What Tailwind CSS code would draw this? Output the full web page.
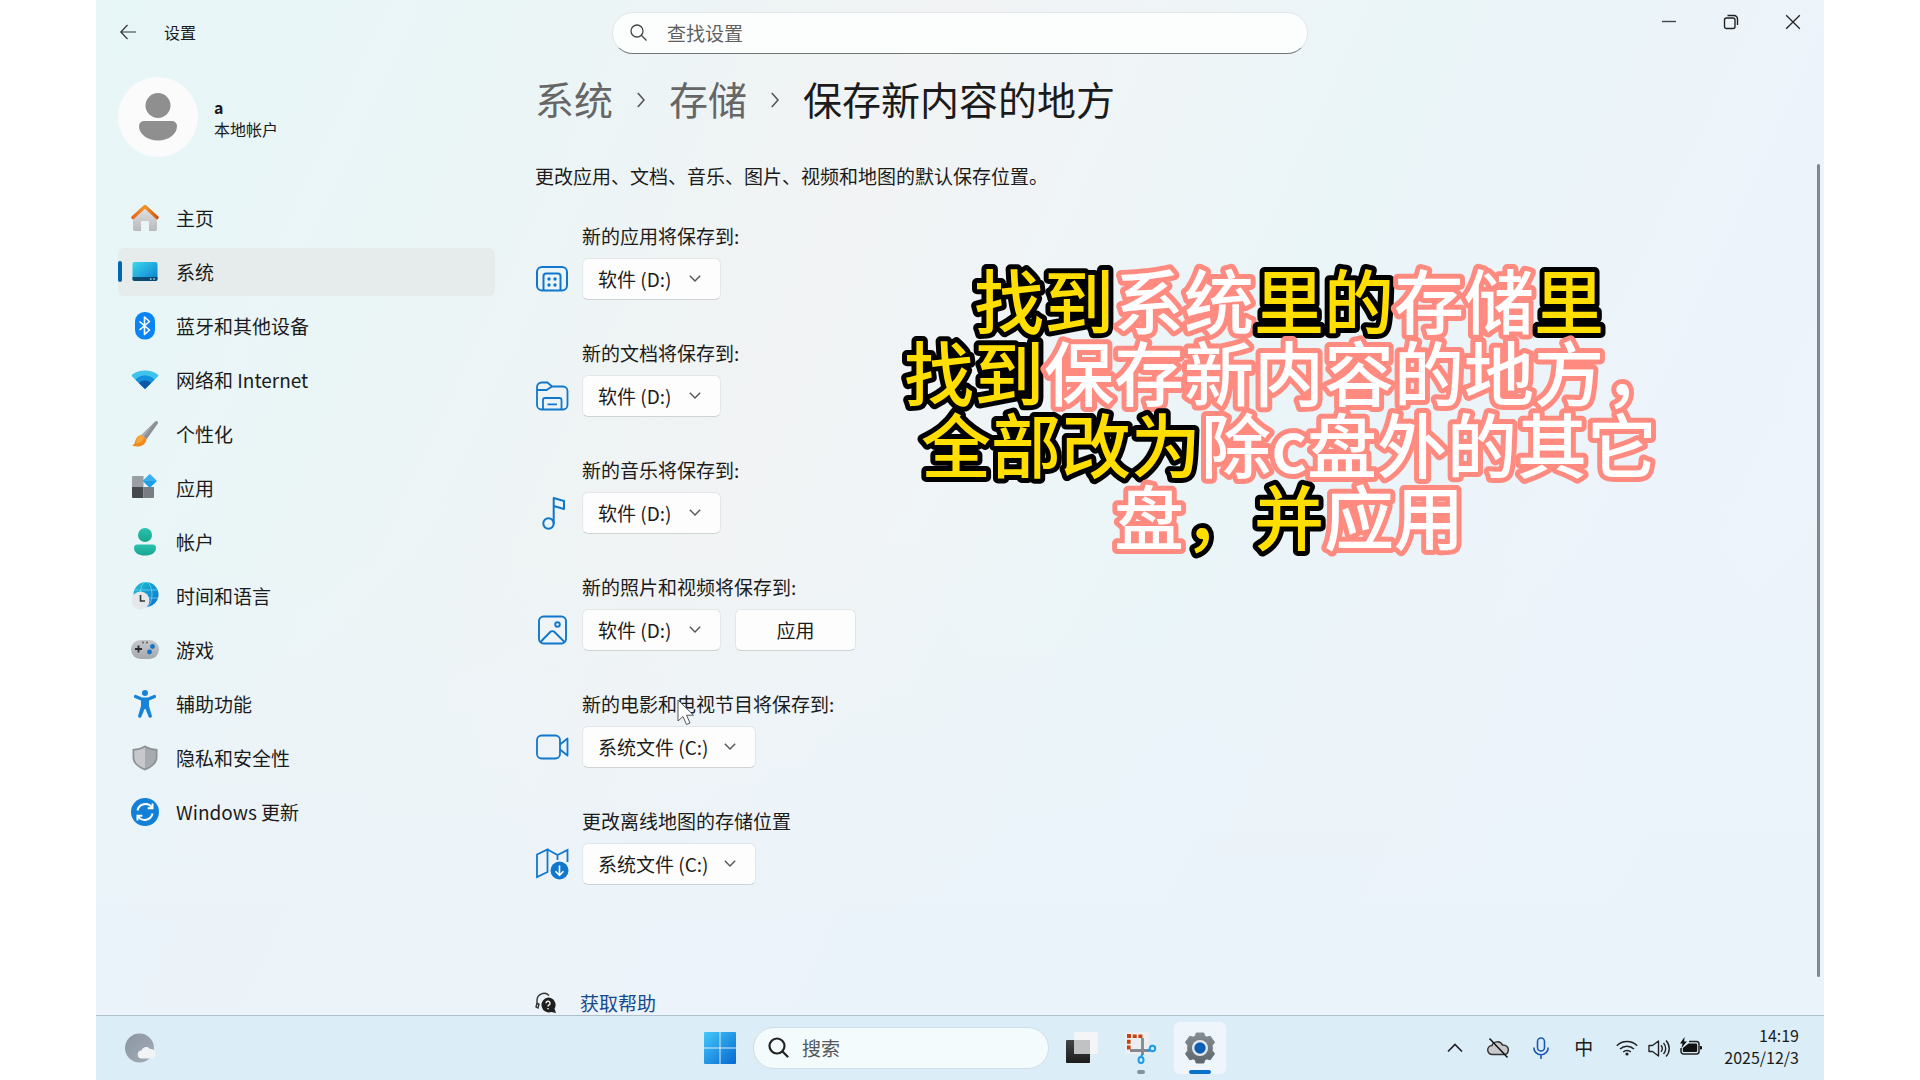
<!DOCTYPE html>
<html lang="zh-CN">
<head>
  <meta charset="UTF-8">
  <meta name="viewport" content="width=device-width, initial-scale=1.0">
  <title>设置 - 保存新内容的地方</title>
  <script src="https://cdn.jsdelivr.net/npm/@tailwindcss/browser@4"></script>
</head>
<body class="bg-white px-24 font-['Noto_Sans_CJK_SC',sans-serif] text-[#1b1b1b] antialiased">
  <div class="relative flex h-screen flex-col overflow-hidden bg-[linear-gradient(180deg,#ebf3fa00_50%,#ebf3fae0_85%),linear-gradient(115deg,#e7f6f7_0%,#eaf5f6_18%,#f1f3f4_38%,#f0f4f6_46%,#eaf5f8_60%,#edf3fa_80%,#ebf4fa_100%)]">

    <!-- 标题栏 -->
    <header class="grid h-[60px] shrink-0 grid-cols-[1fr_696px_1fr]">
      <div class="flex items-center gap-[28px] pt-[4px] pl-[24px]">
        <button aria-label="返回">
          <svg class="h-4 w-4" viewBox="0 0 16 16" fill="none" stroke="#333" stroke-width="1.2"><path d="M16 8H1M7.500 1L0.800 8l6.700 7"/></svg>
        </button>
        <span class="text-[16px] leading-6">设置</span>
      </div>
      <div class="relative pt-[12px]">
        <svg class="absolute top-[24px] left-[18px] h-[17px] w-[17px]" viewBox="0 0 17 17" fill="none" stroke="#444" stroke-width="1.3"><circle cx="7" cy="7" r="6"/><path d="M11.300 11.300L16.500 16.500"/></svg>
        <input type="text" aria-label="查找设置" placeholder="查找设置" class="h-[42px] w-full rounded-full border border-b-[#6f7777] border-[#e2e6e6] bg-[#fcfdfd] pr-6 pb-[2px] pl-[54px] text-[19px] placeholder-[#5f6161] outline-none">
      </div>
      <div class="flex justify-end">
        <button class="flex h-[43px] w-[62px] items-center justify-center" aria-label="最小化">
          <svg class="h-4 w-4" viewBox="0 0 16 16" stroke="#444" stroke-width="1.4"><path d="M1 7.500h14"/></svg>
        </button>
        <button class="flex h-[43px] w-[62px] items-center justify-center" aria-label="还原">
          <svg class="h-4 w-4" viewBox="0 0 16 16" fill="none" stroke="#222" stroke-width="1.4"><rect x="1.500" y="4" width="10.500" height="10.500" rx="2"/><path d="M4.500 1.500H11a3.500 3.500 0 0 1 3.500 3.500v6"/></svg>
        </button>
        <button class="flex h-[43px] w-[62px] items-center justify-center" aria-label="关闭">
          <svg class="h-4 w-4" viewBox="0 0 16 16" stroke="#222" stroke-width="1.3"><path d="M1.200 1.200l13.600 13.600M14.800 1.200L1.200 14.800"/></svg>
        </button>
      </div>
    </header>

    <div class="flex min-h-0 flex-1">
      <!-- 侧边栏 -->
      <aside class="w-[399px] shrink-0 pt-[17px] pl-[22px]">
        <div class="flex items-center gap-4">
          <svg class="h-20 w-20" viewBox="0 0 80 80"><circle cx="40" cy="40" r="40" fill="#fbfbfb"/><circle cx="40" cy="28.500" r="12.500" fill="#8f8f8f"/><path d="M26 44h28a5 5 0 0 1 5 5c0 8-8 14.500-19 14.500S21 57 21 49a5 5 0 0 1 5-5z" fill="#8f8f8f"/></svg>
          <div class="pt-[2px] text-[16px] leading-[22px]">
            <p class="font-bold">a</p>
            <p>本地帐户</p>
          </div>
        </div>

        <nav class="mt-[37px] flex flex-col gap-[6px] text-[19px]">
          <a href="#" class="flex h-12 items-center gap-[17px] rounded-md px-[13px]">
            <svg class="h-7 w-7" viewBox="0 0 28 28"><defs><linearGradient id="wall" x2="0" y2="1"><stop stop-color="#e3e3e5"/><stop offset="1" stop-color="#b9b9bd"/></linearGradient><linearGradient id="roof"><stop stop-color="#e8661b"/><stop offset=".5" stop-color="#f0962a"/><stop offset="1" stop-color="#cf5510"/></linearGradient></defs><path d="M2 12L14 3l12 9v13a2 2 0 0 1-2 2h-6V17h-8v10H4a2 2 0 0 1-2-2z" fill="url(#wall)"/><path d="M2 13.500L14 2.500l12 11" fill="none" stroke="url(#roof)" stroke-width="3.400" stroke-linecap="round" stroke-linejoin="round"/></svg>
            主页
          </a>
          <a href="#" aria-current="page" class="relative flex h-12 items-center gap-[17px] rounded-md bg-[#e6ebeb] px-[13px]">
            <span class="absolute top-[13px] left-0 h-[21px] w-1 rounded-full bg-[#0066b8]"></span>
            <svg class="h-7 w-7" viewBox="0 0 28 28"><defs><linearGradient id="scr" x2="1" y2="1"><stop stop-color="#3ad8ea"/><stop offset="1" stop-color="#0a7bd0"/></linearGradient></defs><rect x="1.500" y="4" width="25" height="19" rx="2" fill="url(#scr)"/><path d="M1.500 19h25v2a2 2 0 0 1-2 2h-21a2 2 0 0 1-2-2z" fill="#0b4a72"/><path d="M19 20.300h1.500v1.500H19zM22.300 20.300h1.500v1.500h-1.500z" fill="#b8dcec"/></svg>
            系统
          </a>
          <a href="#" class="flex h-12 items-center gap-[17px] rounded-md px-[13px]">
            <svg class="h-7 w-7" viewBox="0 0 28 28"><rect x="4" y="0" width="20" height="27.500" rx="9.500" fill="#0a84f5"/><path d="M8.500 9.500l10 8.500-5 4.500V5l5 4.500-10 8.500" fill="none" stroke="#fff" stroke-width="1.600" stroke-linejoin="round"/></svg>
            蓝牙和其他设备
          </a>
          <a href="#" class="flex h-12 items-center gap-[17px] rounded-md px-[13px]">
            <svg class="h-7 w-7" viewBox="0 0 28 28"><defs><clipPath id="fan"><path d="M14 23L1.200 10.500a1.500 1.500 0 0 1 0-2C8 3 20 3 26.800 8.500a1.500 1.500 0 0 1 0 2z"/></clipPath></defs><g clip-path="url(#fan)"><path d="M0 0h28v28H0z" fill="#3fc3ea"/><circle cx="14" cy="23" r="13.500" fill="#1490df"/><circle cx="14" cy="23" r="8.500" fill="#0c57a8"/></g></svg>
            网络和 Internet
          </a>
          <a href="#" class="flex h-12 items-center gap-[17px] rounded-md px-[13px]">
            <svg class="h-7 w-7" viewBox="0 0 28 28"><path d="M24.500 1.200c1.800-.6 3 .6 2.300 2.300L15.500 19.500l-5-4.500z" fill="#8d9096"/><path d="M24.500 1.200L10.500 15l2 2z" fill="#a9acb1"/><path d="M10.500 15l5 4.500c-1 6.500-8 8.500-14.500 6 3-.8 2.800-3.300 3.800-6 1-2.800 3.200-4.300 5.700-4.500z" fill="#f08a1c"/><path d="M10.500 15l2.500 2.200c-1 4-4 6-8 6 .5-4 2-7.700 5.500-8.200z" fill="#f9a63c"/></svg>
            个性化
          </a>
          <a href="#" class="flex h-12 items-center gap-[17px] rounded-md px-[13px]">
            <svg class="h-7 w-7" viewBox="0 0 28 28"><path d="M2 2h10.500v11H1V3a1 1 0 0 1 1-1z" fill="#9b9ea4"/><path d="M1 13h11.500v11H2a1 1 0 0 1-1-1z" fill="#45484c"/><path d="M12.500 13H23v10a1 1 0 0 1-1 1h-9.500z" fill="#797c82"/><rect x="13.800" y="2" width="10" height="10" rx="1" transform="rotate(45 18.800 7)" fill="#1e9ee6"/><path d="M18.800 0L12 7h13.600z" fill="#4dbcf0" opacity=".6"/></svg>
            应用
          </a>
          <a href="#" class="flex h-12 items-center gap-[17px] rounded-md px-[13px]">
            <svg class="h-7 w-7" viewBox="0 0 28 28"><defs><linearGradient id="usr" x2="0" y2="1"><stop stop-color="#2cc3b0"/><stop offset="1" stop-color="#16a58f"/></linearGradient></defs><circle cx="14" cy="7" r="7" fill="url(#usr)"/><path d="M6.500 16.500h15a3.500 3.500 0 0 1 3.500 3.500c0 5-5 7.500-11 7.500S3 25 3 20a3.500 3.500 0 0 1 3.500-3.500z" fill="url(#usr)"/></svg>
            帐户
          </a>
          <a href="#" class="flex h-12 items-center gap-[17px] rounded-md px-[13px]">
            <svg class="h-7 w-7" viewBox="0 0 28 28"><defs><linearGradient id="glb" x2="1" y2="1"><stop stop-color="#20c3d4"/><stop offset="1" stop-color="#0a6fd0"/></linearGradient></defs><circle cx="15" cy="12.500" r="12.500" fill="url(#glb)"/><g fill="none" stroke="#7fdaf0" stroke-width=".7"><ellipse cx="15" cy="12.500" rx="6" ry="12.500"/><path d="M4 8h22M3 16h24"/></g><circle cx="9.500" cy="18.500" r="9" fill="#e6e7ea"/><path d="M9.500 13v6h4.500" fill="none" stroke="#333" stroke-width="1.600"/></svg>
            时间和语言
          </a>
          <a href="#" class="flex h-12 items-center gap-[17px] rounded-md px-[13px]">
            <svg class="h-7 w-7" viewBox="0 0 28 28"><defs><linearGradient id="pad" x2="0" y2="1"><stop stop-color="#c6c8cc"/><stop offset="1" stop-color="#a5a8ad"/></linearGradient></defs><rect x="0" y="4" width="28" height="19" rx="9.500" fill="url(#pad)"/><path d="M7.500 9.500v7M4 13h7" stroke="#2b2b2b" stroke-width="1.800"/><circle cx="21.500" cy="10.500" r="2.400" fill="#0f74cc"/><circle cx="18.500" cy="16" r="2.400" fill="#0f74cc"/><circle cx="12" cy="6.500" r=".9" fill="#555"/><circle cx="16" cy="6.500" r=".9" fill="#555"/></svg>
            游戏
          </a>
          <a href="#" class="flex h-12 items-center gap-[17px] rounded-md px-[13px]">
            <svg class="h-7 w-7" viewBox="0 0 28 28"><circle cx="14" cy="3" r="3" fill="#1683d8"/><path d="M4.500 6.500l6 2.500h7l6-2.500" fill="none" stroke="#1683d8" stroke-width="3.200" stroke-linecap="round" stroke-linejoin="round"/><path d="M10 8h8v8l2.800 9.500a1.700 1.700 0 0 1-3.200 1.200L14.500 19h-1l-3.100 7.700a1.700 1.700 0 0 1-3.200-1.200L10 16z" fill="#1683d8"/></svg>
            辅助功能
          </a>
          <a href="#" class="flex h-12 items-center gap-[17px] rounded-md px-[13px]">
            <svg class="h-7 w-7" viewBox="0 0 28 28"><path d="M14 1.500c3.500 2 7.500 3.200 12.500 3.500v8c0 6.500-5 10.500-12.500 13.500C6.500 23.500 1.500 19.500 1.500 13V5C6.500 4.700 10.500 3.500 14 1.500z" fill="#8e9297"/><path d="M14 3.500v21C7.500 22 3.300 18.500 3.300 13V6.500C7.500 6.200 11 5.200 14 3.500z" fill="#c6c8cb"/><path d="M14 3.500v21c6.500-2.500 10.700-6 10.700-11.500V6.500C20.500 6.200 17 5.200 14 3.500z" fill="#a7aaae"/></svg>
            隐私和安全性
          </a>
          <a href="#" class="flex h-12 items-center gap-[17px] rounded-md px-[13px]">
            <svg class="h-7 w-7" viewBox="0 0 28 28"><circle cx="14" cy="14" r="14" fill="#1280d6"/><g fill="none" stroke="#fff" stroke-width="2"><path d="M6.500 12.500a8 8 0 0 1 14.500-2.800"/><path d="M21.500 5.500v4.800h-4.800"/><path d="M21.500 15.500A8 8 0 0 1 7 18.300"/><path d="M6.500 22.500v-4.800h4.800"/></g></svg>
            Windows 更新
          </a>
        </nav>
      </aside>

      <!-- 主内容 -->
      <main class="min-w-0 flex-1 overflow-hidden pt-[14px] pl-[40px]">
        <div class="flex items-center gap-6 text-[39px] leading-[48px]">
          <a href="#" class="text-[#666]">系统</a>
          <svg class="mt-1 h-4 w-2" viewBox="0 0 8 16" fill="none" stroke="#555" stroke-width="1.600"><path d="M.8 1L7 8 .8 15"/></svg>
          <a href="#" class="text-[#666]">存储</a>
          <svg class="mt-1 h-4 w-2" viewBox="0 0 8 16" fill="none" stroke="#555" stroke-width="1.600"><path d="M.8 1L7 8 .8 15"/></svg>
          <h1>保存新内容的地方</h1>
        </div>
        <p class="mt-10 text-[19px] leading-7">更改应用、文档、音乐、图片、视频和地图的默认保存位置。</p>

        <form class="mt-8 flex flex-col gap-[39px] text-[19px]">
          <div class="grid grid-cols-[34px_1fr] items-center gap-x-[13px] gap-y-2">
            <label for="save-apps" class="col-start-2 leading-7">新的应用将保存到:</label>
            <svg class="h-[34px] w-[34px]" viewBox="0 0 34 34" fill="none" stroke="#0f78cc" stroke-width="2"><rect x="2" y="5" width="30" height="23.500" rx="5"/><path d="M8.500 28V14a2.500 2.500 0 0 1 2.500-2.500h12a2.500 2.500 0 0 1 2.500 2.500v14"/><g fill="#0f78cc" stroke="none"><circle cx="14" cy="17" r="1.700"/><circle cx="20" cy="17" r="1.700"/><circle cx="14" cy="23" r="1.700"/><circle cx="20" cy="23" r="1.700"/></g></svg>
            <div class="flex">
              <div class="relative">
                <select id="save-apps" class="h-[42px] w-[139px] appearance-none rounded-md border border-[#e3e6e7] border-b-[#cfd3d4] bg-[#fdfdfd] pl-[15px]"><option>软件 (D:)</option></select>
                <svg class="pointer-events-none absolute top-[17px] right-5 h-[7px] w-3" viewBox="0 0 12 7" fill="none" stroke="#555" stroke-width="1.400"><path d="M.8.8L6 6 11.200.8"/></svg>
              </div>
            </div>
          </div>

          <div class="grid grid-cols-[34px_1fr] items-center gap-x-[13px] gap-y-2">
            <label for="save-docs" class="col-start-2 leading-7">新的文档将保存到:</label>
            <svg class="h-[34px] w-[34px]" viewBox="0 0 34 34" fill="none" stroke="#0f78cc" stroke-width="1.800"><path d="M2 8a4.500 4.500 0 0 1 4.500-4.500h6L17 7.500h11A4.500 4.500 0 0 1 32.500 12v14a4.500 4.500 0 0 1-4.500 4.500H6.500A4.500 4.500 0 0 1 2 26z"/><path d="M2 11h9.500L17 7.500"/><path d="M8 30V21a2 2 0 0 1 2-2h14.500a2 2 0 0 1 2 2v9M12.500 25.300H22"/></svg>
            <div class="flex">
              <div class="relative">
                <select id="save-docs" class="h-[42px] w-[139px] appearance-none rounded-md border border-[#e3e6e7] border-b-[#cfd3d4] bg-[#fdfdfd] pl-[15px]"><option>软件 (D:)</option></select>
                <svg class="pointer-events-none absolute top-[17px] right-5 h-[7px] w-3" viewBox="0 0 12 7" fill="none" stroke="#555" stroke-width="1.400"><path d="M.8.8L6 6 11.200.8"/></svg>
              </div>
            </div>
          </div>

          <div class="grid grid-cols-[34px_1fr] items-center gap-x-[13px] gap-y-2">
            <label for="save-music" class="col-start-2 leading-7">新的音乐将保存到:</label>
            <svg class="h-[34px] w-[34px]" viewBox="0 0 34 34" fill="none" stroke="#0f78cc" stroke-width="2" stroke-linejoin="round"><circle cx="13.500" cy="27.500" r="5.200"/><path d="M18.700 27.500V2l10.300 3v8l-10.300-3"/></svg>
            <div class="flex">
              <div class="relative">
                <select id="save-music" class="h-[42px] w-[139px] appearance-none rounded-md border border-[#e3e6e7] border-b-[#cfd3d4] bg-[#fdfdfd] pl-[15px]"><option>软件 (D:)</option></select>
                <svg class="pointer-events-none absolute top-[17px] right-5 h-[7px] w-3" viewBox="0 0 12 7" fill="none" stroke="#555" stroke-width="1.400"><path d="M.8.8L6 6 11.200.8"/></svg>
              </div>
            </div>
          </div>

          <div class="grid grid-cols-[34px_1fr] items-center gap-x-[13px] gap-y-2">
            <label for="save-photos" class="col-start-2 leading-7">新的照片和视频将保存到:</label>
            <svg class="h-[34px] w-[34px]" viewBox="0 0 34 34" fill="none" stroke="#0f78cc" stroke-width="1.900"><rect x="4" y="3.500" width="27" height="27" rx="4.500"/><circle cx="22.500" cy="11.500" r="2.300"/><path d="M5.500 29l9.700-10a3 3 0 0 1 4.300 0L29.500 29"/></svg>
            <div class="flex gap-[14px]">
              <div class="relative">
                <select id="save-photos" class="h-[42px] w-[139px] appearance-none rounded-md border border-[#e3e6e7] border-b-[#cfd3d4] bg-[#fdfdfd] pl-[15px]"><option>软件 (D:)</option></select>
                <svg class="pointer-events-none absolute top-[17px] right-5 h-[7px] w-3" viewBox="0 0 12 7" fill="none" stroke="#555" stroke-width="1.400"><path d="M.8.8L6 6 11.200.8"/></svg>
              </div>
              <button type="button" class="h-[42px] w-[121px] rounded-md border border-[#e3e6e7] border-b-[#cfd3d4] bg-[#fdfdfd]">应用</button>
            </div>
          </div>

          <div class="grid grid-cols-[34px_1fr] items-center gap-x-[13px] gap-y-2">
            <label for="save-movies" class="col-start-2 leading-7">新的电影和电视节目将保存到:</label>
            <svg class="h-[34px] w-[34px]" viewBox="0 0 34 34" fill="none" stroke="#0f78cc" stroke-width="1.800" stroke-linejoin="round"><rect x="2" y="5.500" width="23" height="23" rx="4.500"/><path d="M25 14.500l7.500-6v17l-7.500-6"/></svg>
            <div class="flex">
              <div class="relative">
                <select id="save-movies" class="h-[42px] w-[174px] appearance-none rounded-md border border-[#e3e6e7] border-b-[#cfd3d4] bg-[#fdfdfd] pl-[15px]"><option>系统文件 (C:)</option></select>
                <svg class="pointer-events-none absolute top-[17px] right-5 h-[7px] w-3" viewBox="0 0 12 7" fill="none" stroke="#555" stroke-width="1.400"><path d="M.8.8L6 6 11.200.8"/></svg>
              </div>
            </div>
          </div>

          <div class="grid grid-cols-[34px_1fr] items-center gap-x-[13px] gap-y-2">
            <label for="save-maps" class="col-start-2 leading-7">更改离线地图的存储位置</label>
            <svg class="h-[34px] w-[34px]" viewBox="0 0 34 34" fill="none" stroke="#0f78cc" stroke-width="1.800"><path d="M12.500 25L2 30V7.500l10.500-5zM12.500 2.500L22.500 8l10-5v12M22.500 8v5"/><circle cx="24.500" cy="23.500" r="9" fill="#0f78cc" stroke="none"/><path d="M24.500 18.500v9.500M20.500 24.300l4 4 4-4" stroke="#fff" stroke-width="1.600"/></svg>
            <div class="flex">
              <div class="relative">
                <select id="save-maps" class="h-[42px] w-[174px] appearance-none rounded-md border border-[#e3e6e7] border-b-[#cfd3d4] bg-[#fdfdfd] pl-[15px]"><option>系统文件 (C:)</option></select>
                <svg class="pointer-events-none absolute top-[17px] right-5 h-[7px] w-3" viewBox="0 0 12 7" fill="none" stroke="#555" stroke-width="1.400"><path d="M.8.8L6 6 11.200.8"/></svg>
              </div>
            </div>
          </div>
        </form>

        <a href="#" class="mt-[104px] flex items-center gap-[23px] text-[19px] leading-7 text-[#17498f]">
          <svg class="h-[22px] w-[22px]" viewBox="0 0 22 22"><path d="M2 13V8a7 7 0 0 1 12-4.500M1 15l1-4 2 1-1 4z" fill="none" stroke="#333" stroke-width="1.400"/><path d="M13 5.500a7.500 7.500 0 0 1 6.500 11.300L21 21l-4.500-1A7.500 7.500 0 1 1 13 5.500z" fill="#1f1f1f"/><path d="M11 11.200a2 2 0 1 1 3 1.700c-.8.500-1 .8-1 1.600M13 16v1.300" fill="none" stroke="#fff" stroke-width="1.400"/></svg>
          获取帮助
        </a>
      </main>
    </div>

    <!-- 滚动条 -->
    <div class="absolute top-[164px] right-[4px] h-[813px] w-[3px] rounded-full bg-[#7f8a8d]"></div>

    <!-- 字幕 -->
    <svg class="pointer-events-none absolute top-[263px] left-[793px] h-[300px] w-[800px] fill-[#ffde00] stroke-black text-[70px] font-medium [paint-order:stroke_fill]" viewBox="0 0 800 300" text-anchor="middle" stroke-width="10" stroke-linejoin="round">
      <text x="400" y="66">找到<tspan class="fill-white stroke-[#ff8a80]">系统</tspan>里的<tspan class="fill-white stroke-[#ff8a80]">存储</tspan>里</text>
      <text x="400" y="138">找到<tspan class="fill-white stroke-[#ff8a80]">保存新内容的地方，</tspan></text>
      <text x="400" y="210">全部改为<tspan class="fill-white stroke-[#ff8a80]">除c盘外的其它</tspan></text>
      <text x="400" y="282"><tspan class="fill-white stroke-[#ff8a80]">盘</tspan>，并<tspan class="fill-white stroke-[#ff8a80]">应用</tspan></text>
    </svg>

    <!-- 鼠标指针 -->
    <svg class="pointer-events-none absolute top-[699px] left-[581px] h-[27px] w-[18px]" viewBox="0 0 18 27"><path d="M1 1v21l5-4.500 3.500 8 3.500-1.500-3.500-7.800H16.500z" fill="#fff" stroke="#555" stroke-width="1"/></svg>

    <!-- 任务栏 -->
    <footer class="grid h-[65px] shrink-0 grid-cols-[1fr_auto_1fr] items-center border-t border-[#adc0cc] bg-[#dbeef8]">
      <button class="ml-[29px] w-[31px]" aria-label="天气">
        <svg class="h-[31px] w-[31px]" viewBox="0 0 31 31"><defs><linearGradient id="moon" x2="1" y2="1"><stop stop-color="#8b95a1"/><stop offset="1" stop-color="#a3adb8"/></linearGradient></defs><circle cx="14.500" cy="15" r="14.500" fill="url(#moon)"/><path d="M17 25.500a4 4 0 0 1-.5-8c1-3.500 6-5 8.500-1.500 4-.5 6 2.500 5.500 5.500s-2 4-4 4z" fill="#f1f3f5"/></svg>
      </button>

      <div class="flex items-center gap-[7px]">
        <button class="flex h-[52px] w-[52px] items-center justify-center" aria-label="开始">
          <svg class="h-8 w-8" viewBox="0 0 32 32"><defs><linearGradient id="win" gradientUnits="userSpaceOnUse" x1="0" y1="0" x2="32" y2="32"><stop stop-color="#44c8fb"/><stop offset="1" stop-color="#0668cf"/></linearGradient></defs><path d="M1 0h14.500v15.500H0V1a1 1 0 0 1 1-1zM16.500 0H31a1 1 0 0 1 1 1v14.500H16.500zM0 16.500h15.500V32H1a1 1 0 0 1-1-1zM16.500 16.500H32V31a1 1 0 0 1-1 1H16.500z" fill="url(#win)"/></svg>
        </button>
        <div class="relative">
          <svg class="absolute top-[10px] left-[15px] h-[21px] w-[21px]" viewBox="0 0 21 21" fill="none" stroke="#222" stroke-width="2.200" stroke-linecap="round"><circle cx="9" cy="9" r="7.500"/><path d="M14.500 14.500L19.500 19.500"/></svg>
          <input type="text" aria-label="搜索" placeholder="搜索" class="h-[42px] w-[296px] rounded-full border border-[#cddde6] bg-[#f4fbfd] pr-4 pb-[2px] pl-[48px] text-[19px] placeholder-[#55595b] outline-none">
        </div>
        <button class="flex h-[52px] w-[52px] items-center justify-center" aria-label="任务视图">
          <svg class="h-8 w-8" viewBox="0 0 32 32"><defs><linearGradient id="tv" x2="0" y2="1"><stop stop-color="#454545"/><stop offset="1" stop-color="#1c1c1c"/></linearGradient></defs><rect x="0" y="8" width="24" height="23" rx="1" fill="url(#tv)"/><rect x="8" y="0" width="24" height="22" rx="1.500" fill="#f4f5f6"/><path d="M8 8h16v14H9.500A1.500 1.500 0 0 1 8 20.500z" fill="#c0c2c3"/></svg>
        </button>
        <button class="relative flex h-[52px] w-[52px] items-center justify-center" aria-label="截图工具">
          <svg class="h-8 w-8" viewBox="0 0 32 32"><rect x="0" y="0" width="24" height="22" rx="2" fill="#eceff1"/><path d="M2 4.200h16M3.800 2v17" fill="none" stroke="#c9400f" stroke-width="3.600" stroke-dasharray="4 1.700"/><path d="M17.500 6v17M5 18.500h20" stroke="#85898d" stroke-width="2.800"/><g fill="none" stroke="#1d9bea" stroke-width="2"><path d="M22 19l3-2"/><circle cx="27.500" cy="16.500" r="2.700"/><path d="M17.500 22l-1.500 3"/><ellipse cx="16" cy="28" rx="2.500" ry="3"/></g></svg>
          <span class="absolute bottom-0 h-1 w-2 rounded-full bg-[#84929b]"></span>
        </button>
        <button class="relative flex h-[52px] w-[52px] items-center justify-center rounded-md bg-[#eef6fc]" aria-label="设置">
          <svg class="h-8 w-8" viewBox="0 0 32 32"><defs><linearGradient id="gear" x2="0" y2="1"><stop stop-color="#858d94"/><stop offset="1" stop-color="#5f676e"/></linearGradient></defs><path d="M11.500 3.700L12.200 1h7.600l.7 2.700 2.500 1.500 3.200-1 4.300 6-2.300 3.300v5l2.300 3.300-4.300 6-3.200-1-2.500 1.500-.7 2.700h-7.600l-.7-2.700L9 26.800l-3.200 1-4.300-6 2.300-3.300v-5L1.500 10.200l4.300-6 3.200 1z" fill="url(#gear)" stroke="url(#gear)" stroke-linejoin="round"/><circle cx="16" cy="16" r="8" fill="#e4ebf0"/><circle cx="16" cy="16" r="5.700" fill="#0b5fb5"/></svg>
          <span class="absolute bottom-0 h-1 w-[22px] rounded-full bg-[#0b72c9]"></span>
        </button>
      </div>

      <div class="flex items-center justify-end pr-[25px]">
        <button class="flex h-11 w-[43px] items-center justify-center" aria-label="显示隐藏的图标">
          <svg class="h-4 w-4" viewBox="0 0 16 16" fill="none" stroke="#222" stroke-width="1.700"><path d="M1 11.500l7-7 7 7"/></svg>
        </button>
        <button class="flex h-11 w-[43px] items-center justify-center" aria-label="OneDrive">
          <svg class="h-[22px] w-[22px]" viewBox="0 0 22 22" fill="none" stroke="#333" stroke-width="1.500"><path d="M5.500 17.500a4.500 4.500 0 0 1-.5-9C6 4.500 13 3 15.500 8c4 0 6 2.500 5.800 5.200-.2 2.800-2.300 4.300-4.800 4.300z" fill="#c9c9cb"/><path d="M2.500 1.500l18 19" stroke="#111"/></svg>
        </button>
        <button class="flex h-11 w-[43px] items-center justify-center" aria-label="麦克风">
          <svg class="h-[22px] w-[22px]" viewBox="0 0 22 22" fill="none" stroke="#1d58b5" stroke-width="1.600"><rect x="7.500" y="1" width="7" height="13" rx="3.500"/><path d="M3.800 10.500a7.200 7.200 0 0 0 14.400 0M11 17.700V22"/></svg>
        </button>
        <button class="flex h-11 w-[43px] items-center justify-center pb-[2px] text-[19px]" aria-label="输入法">中</button>
        <button class="ml-[11px] flex h-11 items-center gap-[10px]" aria-label="网络、音量和电池">
          <svg class="h-[22px] w-[22px]" viewBox="0 0 22 22" fill="none" stroke="#222" stroke-width="1.500"><path d="M.8 8.800a14.500 14.500 0 0 1 20.400 0M4 12a10 10 0 0 1 14 0M7.200 15a5.500 5.500 0 0 1 7.600 0"/><circle cx="11" cy="17" r="1.600" fill="#222" stroke="none"/></svg>
          <svg class="h-[22px] w-[22px]" viewBox="0 0 22 22" fill="none" stroke="#222" stroke-width="1.400"><path d="M1 8.500h3.500L10.500 4v15l-6-4.500H1z" stroke-linejoin="round"/><path d="M13 8.300a5 5 0 0 1 0 6.400M15.500 6a8 8 0 0 1 0 11M18 3.500a11.500 11.500 0 0 1 0 16"/></svg>
          <svg class="h-[22px] w-[22px]" viewBox="0 0 22 22"><path d="M9 4.500h7.500A2.500 2.500 0 0 1 19 7v7.500a2.500 2.500 0 0 1-2.500 2.500h-13A2.500 2.500 0 0 1 1 14.500V11" fill="none" stroke="#222" stroke-width="1.500"/><path d="M8.500 6.500H16a1.200 1.200 0 0 1 1.200 1.200v6A1.200 1.200 0 0 1 16 15H4a1.200 1.200 0 0 1-1.200-1.200V11z" fill="#111"/><path d="M20 9h1a1 1 0 0 1 1 1v1.500a1 1 0 0 1-1 1h-1zM4.500 0L0 6.500h2.500L1.500 11 7 4.500H4.200z" fill="#111"/></svg>
        </button>
        <button class="ml-[22px] pb-1 text-right text-[16px] leading-[22px]">14:19<br>2025/12/3</button>
      </div>
    </footer>
  </div>
</body>
</html>
